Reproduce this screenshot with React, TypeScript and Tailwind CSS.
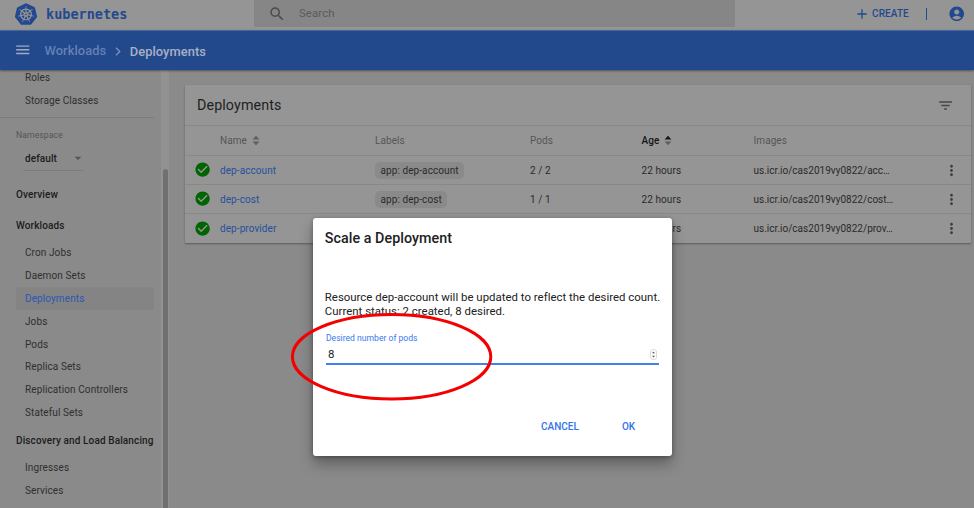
import React from "react";
import {
  MdAccountCircle,
  MdAdd,
  MdArrowDropDown,
  MdCheckCircle,
  MdFilterList,
  MdMenu,
  MdMoreVert,
  MdSearch,
} from "react-icons/md";
import { SiKubernetes } from "react-icons/si";

const workloads = [
  "Cron Jobs",
  "Daemon Sets",
  "Deployments",
  "Jobs",
  "Pods",
  "Replica Sets",
  "Replication Controllers",
  "Stateful Sets",
];

const deployments = [
  { name: "dep-account", label: "app: dep-account", pods: "2 / 2", image: "us.icr.io/cas2019vy0822/acc…" },
  { name: "dep-cost", label: "app: dep-cost", pods: "1 / 1", image: "us.icr.io/cas2019vy0822/cost…" },
  { name: "dep-provider", label: "", pods: "", image: "us.icr.io/cas2019vy0822/prov…" },
];

function NavItem({ label, active = false }: { label: string; active?: boolean }) {
  return (
    <li
      className={`ml-4 flex h-[22.9px] w-[138px] items-center pl-[9px] ${
        active ? "bg-[#848484] text-[#2a58b4]" : ""
      }`}
    >
      {label}
    </li>
  );
}

function NavHeading({ label }: { label: string }) {
  return (
    <h3 className="flex h-[22.9px] items-center pl-4 font-medium tracking-[0.12px] whitespace-nowrap text-[#1c1c1c]">
      {label}
    </h3>
  );
}

function SortArrows({ ascending = false }: { ascending?: boolean }) {
  return (
    <svg className="ml-[5px] h-[11px] w-[8px]" viewBox="0 0 8 11">
      <path d="M0.6 4.4 4 0.7l3.4 3.7z" fill={ascending ? "#161616" : "#5f5f5f"} />
      <path d="M0.6 6.6 4 10.3l3.4-3.7z" fill="#5f5f5f" />
    </svg>
  );
}

function Header() {
  return (
    <header className="flex h-[30px] shrink-0 bg-[#959595]">
      <div className="flex h-[27px] w-[254px] items-center pl-[15px]">
        <SiKubernetes className="size-[22px] text-[#22498f]" />
        <span className="mt-[2px] ml-[9px] font-['DejaVu_Sans_Mono',monospace] text-[13.5px] font-bold text-[#22498f]">
          kubernetes
        </span>
      </div>
      <div className="flex h-[27px] w-[481px] items-center rounded-b-[1px] bg-[#868686] pl-[14px]">
        <MdSearch className="size-[18px] text-[#4b4b4b]" />
        <span className="ml-[13px] text-[11.4px] tracking-[0.1px] text-[#5a5a5a]">Search</span>
      </div>
      <div className="flex h-[27px] flex-1 items-center pl-[119px] text-[#22498f]">
        <MdAdd className="size-[16px]" />
        <span className="ml-[2px] w-[40px] text-[10px] font-medium tracking-[0.1px]">CREATE</span>
        <span className="ml-[14px] h-[12px] w-px bg-[#22498f]" />
        <MdAccountCircle className="ml-[20.5px] size-[17.5px]" />
      </div>
    </header>
  );
}

function Sidebar() {
  return (
    <nav className="flex w-[169px] shrink-0 overflow-hidden text-[10px] tracking-[0.1px] text-[#2f2f2f]">
      <div className="-mt-[4.1px] w-[161px] shrink-0">
        <ul>
          <NavItem label="Roles" />
          <NavItem label="Storage Classes" />
        </ul>
        <div className="mt-[5.3px] w-[154px] border-t border-[#7b7b7b] pt-[3px] pl-4">
          <div className="flex h-[28px] items-center text-[8.6px] tracking-[0.1px] text-[#555555]">
            Namespace
          </div>
          <div className="ml-[7px] flex h-[22px] w-[60px] items-center justify-between border-b border-[#7b7b7b] pb-[2px] pl-[2px] font-medium text-[#1c1c1c]">
            default
            <MdArrowDropDown className="-mr-[3px] size-[16px] text-[#555555]" />
          </div>
        </div>
        <div className="mt-[11.9px]">
          <NavHeading label="Overview" />
        </div>
        <div className="mt-[8.3px]">
          <NavHeading label="Workloads" />
        </div>
        <ul className="mt-[4.1px]">
          {workloads.map((label) => (
            <NavItem key={label} label={label} active={label === "Deployments"} />
          ))}
        </ul>
        <div className="mt-[4.6px]">
          <NavHeading label="Discovery and Load Balancing" />
        </div>
        <ul className="mt-[4.2px]">
          <NavItem label="Ingresses" />
          <NavItem label="Services" />
        </ul>
      </div>
      <div className="flex w-[8px] shrink-0 justify-center bg-[#929292] pt-[99px]">
        <div className="h-[360px] w-[5px] rounded-t-full bg-[#707070]" />
      </div>
    </nav>
  );
}

const columns = "grid grid-cols-[35px_155px_155px_111.5px_112px_188px_1fr] items-center";

function DeploymentsCard() {
  return (
    <section className="h-[158px] w-[786px] rounded-[1px] bg-[#959595] text-[10px] tracking-[0.08px] text-[#2a2a2a] shadow-[0_1px_2px_rgba(0,0,0,0.35)]">
      <div className="flex h-[41px] items-center justify-between border-b border-[#888888] pr-[17px] pl-[12px]">
        <h2 className="pt-[2px] text-[14.3px] tracking-[0.1px] text-[#1f1f1f]">Deployments</h2>
        <MdFilterList className="size-[17px] text-[#474747]" />
      </div>
      <div className={`${columns} h-[30px] border-b border-[#888888] text-[#555555]`}>
        <span />
        <span className="flex items-center">
          Name <SortArrows />
        </span>
        <span>Labels</span>
        <span>Pods</span>
        <span className="flex items-center font-medium text-[#161616]">
          Age <SortArrows ascending />
        </span>
        <span>Images</span>
      </div>
      {deployments.map((item) => (
        <div
          key={item.name}
          className={`${columns} h-[29px] border-b border-[#888888] last:border-b-0`}
        >
          <MdCheckCircle className="ml-[9px] size-[17.2px] text-[#006400]" />
          <span className="text-[#26509f]">{item.name}</span>
          <span>
            {item.label && (
              <span className="inline-flex h-[17px] items-center rounded-[5px] bg-[#8a8a8a] px-[5.5px]">
                {item.label}
              </span>
            )}
          </span>
          <span>{item.pods}</span>
          <span>22 hours</span>
          <span className="tracking-[0.02px]">{item.image}</span>
          <MdMoreVert className="ml-px size-[17px] text-[#3f3f3f]" />
        </div>
      ))}
    </section>
  );
}

function ScaleDialog() {
  return (
    <div className="absolute top-[218px] left-[313.4px] flex h-[238.4px] w-[358.4px] flex-col rounded-[3px] bg-white text-[#212121] shadow-[0_8px_14px_rgba(0,0,0,0.3),0_1px_4px_rgba(0,0,0,0.3)]">
      <h2 className="mt-[10px] ml-[11.4px] h-5 text-[14.3px] leading-5 font-medium tracking-[0.05px]">
        Scale a Deployment
      </h2>
      <p className="mt-[42px] ml-[11.4px] text-[11.4px] leading-[14px] tracking-[0.02px] whitespace-nowrap">
        Resource dep-account will be updated to reflect the desired count.
        <br />
        Current status: 2 created, 8 desired.
      </p>
      <label className="mt-[14px] ml-[12.6px] text-[8.6px] leading-[12px] text-[#3a78ee]">
        Desired number of pods
      </label>
      <div className="ml-[12.6px] flex h-[21px] w-[333px] items-center justify-between border-b-2 border-[#4080f0] pt-[2px] pr-[2px] pl-[2px] text-[11.4px]">
        8
        <svg className="h-[11px] w-[7px]" viewBox="0 0 7 11">
          <rect x="0.5" y="0.5" width="6" height="10" rx="2.5" fill="#fff" stroke="#dcdcdc" />
          <path d="M2 4.2 3.5 2.5 5 4.2zM2 6.8 3.5 8.5 5 6.8z" fill="#555" />
        </svg>
      </div>
      <div className="mt-[52px] flex h-[18px] items-center pl-[227.6px] text-[10px] font-medium text-[#3273ea]">
        <span className="w-[81px]">CANCEL</span>
        <span>OK</span>
      </div>
    </div>
  );
}

export default function App() {
  return (
    <div className="relative flex h-[508px] w-[974px] flex-col overflow-hidden bg-[#8a8a8a] font-[Roboto,sans-serif] text-[10px]">
      <Header />
      <div className="z-10 flex h-[40px] shrink-0 items-center border-t border-[#4866a0] bg-[#22498c] shadow-[0_1px_2px_rgba(0,0,0,0.4)]">
        <MdMenu className="-mt-px ml-[14.2px] size-[17.5px] text-[#a0abc0]" />
        <span className="ml-[12.8px] text-[12.9px] font-medium tracking-[0.05px] text-[#6580b4]">
          Workloads
        </span>
        <svg className="mt-[2px] ml-[9px] h-[9px] w-[6px]" viewBox="0 0 6 9">
          <path d="M1 0.8 4.8 4.5 1 8.2" fill="none" stroke="#7c93bf" strokeWidth="1.3" />
        </svg>
        <span className="mt-[2px] ml-[8.6px] text-[12.9px] font-medium tracking-[0.05px] text-[#a8b1c3]">
          Deployments
        </span>
      </div>
      <div className="flex min-h-0 flex-1">
        <Sidebar />
        <main className="pt-[15px] pl-[16px]">
          <DeploymentsCard />
        </main>
      </div>
      <ScaleDialog />
      <svg className="absolute top-[312px] left-[290px] h-[90px] w-[204px]" viewBox="0 0 204 90">
        <ellipse cx="101.6" cy="44.7" rx="99.2" ry="42.2" fill="none" stroke="#f40000" strokeWidth="3" />
      </svg>
    </div>
  );
}
